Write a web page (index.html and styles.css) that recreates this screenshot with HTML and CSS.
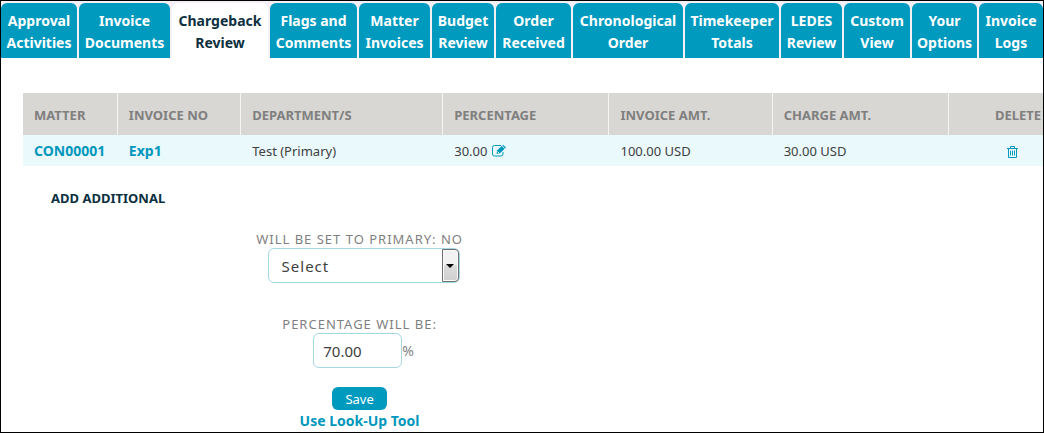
FILE: index.html
```
<!doctype html>
<html lang="en">
<head>
<meta charset="utf-8">
<meta name="viewport" content="width=device-width, initial-scale=1">
<title>Chargeback Review</title>
<link rel="stylesheet" href="styles.css">
</head>

<body>

<nav class="tabs">
	<a class="tab" href="#">Approval<br>Activities</a>
	<a class="tab" href="#">Invoice<br>Documents</a>
	<a class="tab active" href="#" aria-current="page">Chargeback<br>Review</a>
	<a class="tab" href="#">Flags and<br>Comments</a>
	<a class="tab" href="#">Matter<br>Invoices</a>
	<a class="tab" href="#">Budget<br>Review</a>
	<a class="tab" href="#">Order<br>Received</a>
	<a class="tab" href="#">Chronological<br>Order</a>
	<a class="tab" href="#">Timekeeper<br>Totals</a>
	<a class="tab" href="#">LEDES<br>Review</a>
	<a class="tab" href="#">Custom<br>View</a>
	<a class="tab" href="#">Your<br>Options</a>
	<a class="tab" href="#">Invoice<br>Logs</a>
</nav>

<main class="content">
	<table class="charges">
		<colgroup>
			<col class="col-matter">
			<col class="col-invoice">
			<col class="col-department">
			<col class="col-percentage">
			<col class="col-amount">
			<col class="col-charge">
			<col class="col-delete">
		</colgroup>
		<thead>
			<tr>
				<th scope="col">MATTER</th>
				<th scope="col">INVOICE NO</th>
				<th scope="col">DEPARTMENT/S</th>
				<th scope="col">PERCENTAGE</th>
				<th scope="col">INVOICE AMT.</th>
				<th scope="col">CHARGE AMT.</th>
				<th scope="col" class="delete">DELETE</th>
			</tr>
		</thead>
		<tbody>
			<tr>
				<td><a class="link" href="#">CON00001</a></td>
				<td><a class="link" href="#">Exp1</a></td>
				<td>Test (Primary)</td>
				<td>
					<span class="percent">30.00
						<button type="button" class="icon-button" aria-label="Edit percentage">
							<svg width="15" height="13" viewBox="0 0 15 13">
								<path d="M9 1.5H2.5Q.5 1.5.5 3.5V10Q.5 12 2.5 12H9Q11 12 11 10V8" fill="none" stroke="currentColor" />
								<path d="M5 6.5L11 .7 14 3.4 8 9.3 4.6 9.8Z" fill="currentColor" />
								<path d="M10 1.8L12.8 4.5M5.5 7.5L7 9" stroke="#eaf9fb" />
							</svg>
						</button>
					</span>
				</td>
				<td>100.00 USD</td>
				<td>30.00 USD</td>
				<td class="delete">
					<button type="button" class="icon-button trash" aria-label="Delete">
						<svg width="11" height="12" viewBox="0 0 11 12" fill="none" stroke="currentColor">
							<path d="M0 2.5H11M3.5 2.5V.5H7.5V2.5M1.5 2.5V11.5H9.5V2.5" />
							<path d="M3.5 4.5V9.5M5.5 4.5V9.5M7.5 4.5V9.5" />
						</svg>
					</button>
				</td>
			</tr>
		</tbody>
	</table>

	<h2 class="heading">ADD ADDITIONAL</h2>

	<form class="add-form">
		<label class="label" for="department">WILL BE SET TO PRIMARY: NO</label>
		<div class="field select-field">
			<div class="select-box">
				<select id="department" class="input select">
					<option>Select</option>
				</select>
				<span class="select-arrow"></span>
			</div>
		</div>

		<label class="label" for="percentage">PERCENTAGE WILL BE:</label>
		<div class="field">
			<input id="percentage" class="input percentage" type="text" value="70.00"><span class="unit">%</span>
		</div>

		<button type="button" class="save">Save</button>
		<a class="link" href="#">Use Look-Up Tool</a>
	</form>
</main>

</body>
</html>
```
FILE: styles.css
```
* {
	box-sizing: border-box;
}

body {
	margin: 0;
	min-height: 100vh;
	padding-top: 2px;
	border: 1px solid #000;
	background: linear-gradient(#f5f0f6, #f5f0f6) top / 100% 57px no-repeat #fff;
	color: #404040;
	font-family: "Noto Sans", sans-serif;
	font-size: 13px;
	line-height: 18px;
}

.tabs {
	display: grid;
	grid-template-columns: 76fr 91fr 96fr 87fr 71fr 62fr 75fr 110fr 94fr 61fr 66fr 65fr 64fr;
	gap: 2px;
}

.tab {
	padding: 7px 0 4px;
	border-radius: 6px 6px 0 0;
	background: #009abf;
	color: #fff;
	font-size: 14px;
	font-weight: bold;
	line-height: 22px;
	text-align: center;
	text-decoration: none;
	white-space: nowrap;
}

.tab.active {
	background: #fff;
	color: #0c3040;
}

.content {
	padding: 35px 0 0 22px;
}

.charges {
	width: 100%;
	table-layout: fixed;
	border-collapse: separate;
	border-spacing: 0;
}

.col-matter { width: 9.3%; }
.col-invoice { width: 12.1%; }
.col-department { width: 19.8%; }
.col-percentage { width: 16.3%; }
.col-amount { width: 16%; }
.col-charge { width: 17.3%; }
.col-delete { width: 9.2%; }

.charges th {
	height: 42px;
	padding: 2px 0 0 11px;
	border-right: 1px solid #f5f5f3;
	background: #d9d7d3;
	color: #7f7f7f;
	text-align: left;
	white-space: nowrap;
}

.charges td {
	height: 31px;
	padding: 0 0 0 11px;
	background: #eaf9fb;
	white-space: nowrap;
}

.charges .delete {
	padding-right: 2px;
	border-right: 0;
	text-align: right;
}

.link {
	color: #0097bd;
	font-size: 14px;
	font-weight: bold;
	text-decoration: none;
}

.percent {
	display: flex;
	align-items: center;
	gap: 5px;
}

.icon-button {
	padding: 0;
	border: 0;
	background: none;
	color: #0097bd;
}

.icon-button svg {
	display: block;
}

.trash {
	display: inline-block;
	margin-right: 23px;
	vertical-align: middle;
}

.heading {
	margin: 23px 0 0 28px;
	color: #0c3040;
	font-size: 13px;
	line-height: 18px;
}

.add-form {
	display: flex;
	flex-direction: column;
	align-items: center;
	width: 66%;
}

.label {
	margin-top: 24px;
	padding-bottom: 1px;
	color: #7f7f7f;
	letter-spacing: 1px;
	line-height: 16px;
}

.field {
	display: flex;
	align-items: center;
	padding-left: 8px;
}

.select-field {
	margin-bottom: 9px;
}

.input {
	height: 35px;
	padding: 0 0 0 9px;
	border: 1px solid #a5d8e3;
	border-radius: 6px;
	background: #fff;
	color: #404040;
	font-family: inherit;
	font-size: 15px;
}

.select-box {
	position: relative;
	width: 192px;
}

.select {
	width: 100%;
	padding-left: 13px;
	appearance: none;
	letter-spacing: 1px;
}

.select-arrow {
	position: absolute;
	top: 1px;
	right: 1px;
	bottom: 1px;
	display: flex;
	align-items: center;
	justify-content: center;
	width: 17px;
	border: 1px solid #707070;
	border-radius: 0 4px 4px 0;
	background: linear-gradient(#f2f2f2 50%, #dcdcdc 50%, #cfcfcf);
	box-shadow: inset 0 0 0 1px #fafafa;
	pointer-events: none;
}

.select-arrow::after {
	content: "";
	border: 4px solid transparent;
	border-top-color: #000;
	border-bottom: 0;
}

.percentage {
	width: 89px;
}

.unit {
	color: #7f7f7f;
	font-size: 14px;
}

.save {
	height: 23px;
	margin-top: 19px;
	padding: 0 13px;
	border: 0;
	border-radius: 6px;
	background: #009abf;
	color: #fff;
	font-family: inherit;
	font-size: 13px;
}

.add-form .link {
	margin-top: 2px;
}
```
